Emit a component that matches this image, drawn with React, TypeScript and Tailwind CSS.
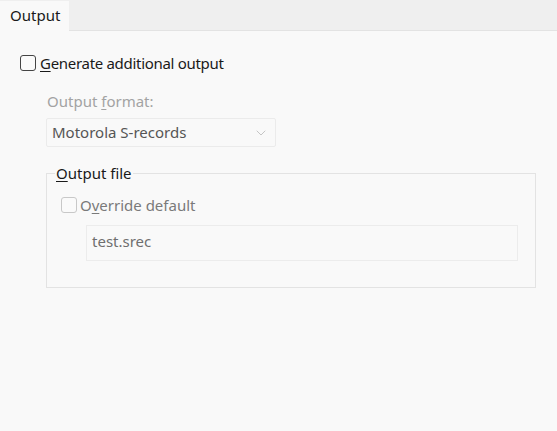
import { ChevronDown } from 'lucide-react';

// Output options page (disabled state)
export default function App() {
  return (
    <div className="w-[557px] h-[431px] bg-[#f9f9f9] text-[15px] text-[#1a1a1a] overflow-hidden" style={{ fontFamily: '"Noto Sans", "Open Sans", sans-serif' }}>
      {/* tab strip */}
      <div className="h-[31px] bg-[#efefef] border-b border-[#e3e3e3] flex items-end">
        <div className="h-[30px] w-[69px] bg-[#f9f9f9] -mb-px pl-[10px] pt-[4px] leading-[20px]">Output</div>
      </div>

      <div className="pl-[20px] pt-[22px]">
        <label className="flex items-center gap-[4px] h-[20px]">
          <span className="w-[16px] h-[16px] rounded-[3px] border border-[#444] bg-[#fafafa]" />
          <span className="tracking-[-0.3px]"><u className="underline-offset-2">G</u>enerate additional output</span>
        </label>

        <div className="pl-[26px] pt-[18px]">
          <div className="text-[#a3a3a3] h-[20px] leading-[20px] pl-[1px]">Output <u className="underline-offset-2">f</u>ormat:</div>
          <div className="mt-[7px] w-[230px] h-[29px] border border-[#ebebeb] rounded-[2px] flex items-center justify-between pl-[5px] pr-[6px]">
            <span className="text-[#555]">Motorola S-records</span>
            <ChevronDown size={16} strokeWidth={1.2} className="text-[#b8b8b8]" />
          </div>

          <fieldset className="mt-[16px] w-[490px] h-[125px] border border-[#e3e3e3] pl-[14px] pr-[17px] mx-0">
            <legend className="px-[1px] -ml-[6px] leading-[20px]"><u className="underline-offset-2">O</u>utput file</legend>
            <label className="flex items-center gap-[3px] h-[20px] mt-[12px]">
              <span className="w-[16px] h-[16px] rounded-[3px] border border-[#c8c8c8] bg-[#fafafa]" />
              <span className="text-[#7a7a7a]">O<u className="underline-offset-2">v</u>erride default</span>
            </label>
            <div className="mt-[10px] ml-[25px] h-[36px] border border-[#ececec] flex items-center pl-[5px] pb-[4px] text-[#6f6f6f]">test.srec</div>
          </fieldset>
        </div>
      </div>
    </div>
  );
}
